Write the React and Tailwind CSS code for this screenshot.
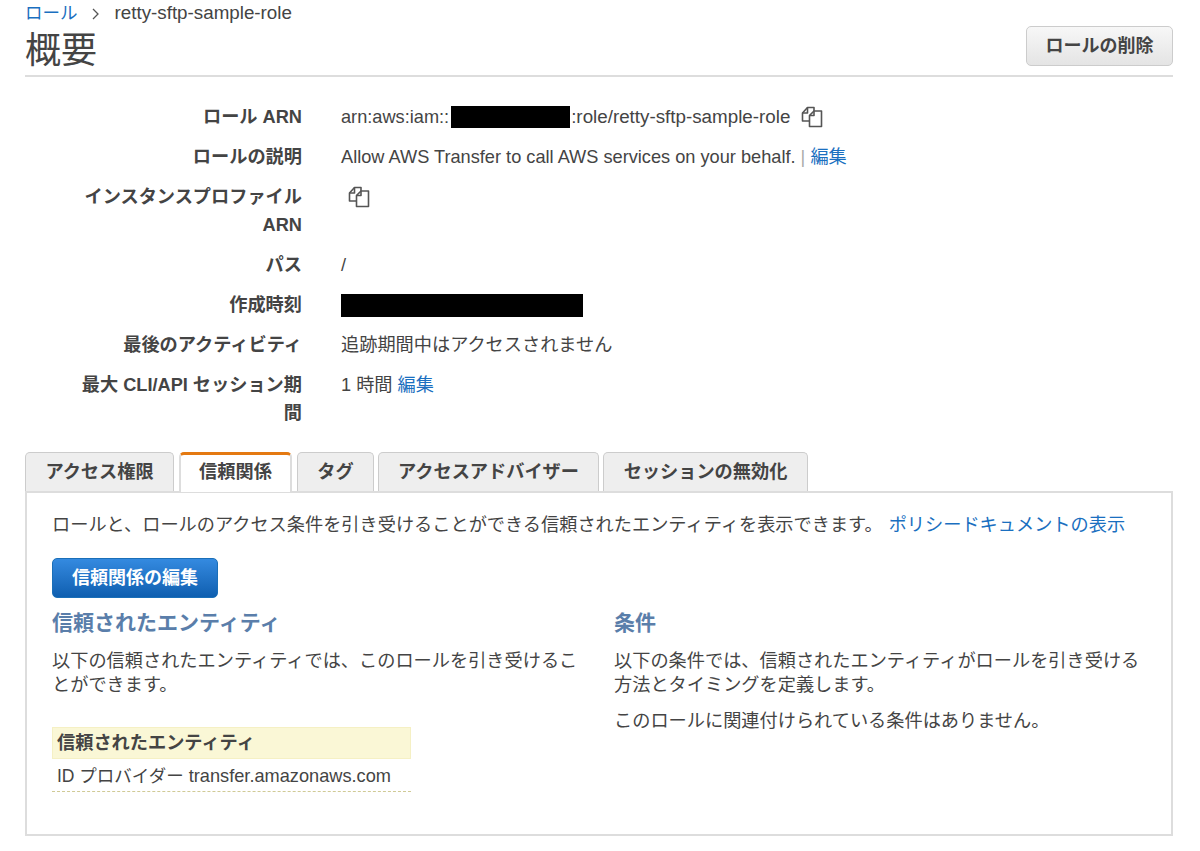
const FONT = "font-['Liberation_Sans','Noto_Sans_CJK_JP',sans-serif]";

const CopyIcon = () => (
  <svg width="22" height="22" viewBox="0 0 22 22" fill="none" stroke="#555" strokeWidth="1.6" strokeLinejoin="round" className="inline-block">
    <path d="M8.5 15H1.5V7L6.5 1.5H13V5" />
    <path d="M6.5 1.5V7H1.5" />
    <path d="M8.5 20.5V9.5L13 5H20.5V20.5Z" fill="#fff" />
    <path d="M13 5V9.5H8.5" />
  </svg>
);

const Row = ({ label, children, className = "" }) => (
  <div className={`flex leading-[28px] ${className}`}>
    <div className="w-[277px] shrink-0 text-right font-bold">{label}</div>
    <div className="ml-[39px] flex-1">{children}</div>
  </div>
);

const Tab = ({ label, active, width }) => (
  <div
    className={
      active
        ? `${width} h-[40px] -mb-px relative z-10 rounded-t-[5px] border-x-2 border-x-[#ddd] border-t-[3px] border-t-[#e47911] bg-white text-center font-bold leading-[34px]`
        : `${width} h-[39px] rounded-t-[5px] border-x border-t border-[#ccc] bg-[#eeeeee] text-center font-bold leading-[38px]`
    }
  >
    {label}
  </div>
);

export default function App() {
  return (
    <div className={`${FONT} h-[851px] w-[1200px] overflow-hidden bg-white pl-[25px] pr-[27px] text-[18.2px] text-[#444]`}>
      <div className="flex h-[27px] items-center text-[18.8px]">
        <span className="text-[17.5px] text-[#1a6fc0]">ロール</span>
        <svg width="10" height="14" viewBox="0 0 10 14" fill="none" stroke="#555" strokeWidth="1.3" className="ml-[13px] mr-[14px]">
          <path d="M2 2l5 5-5 5" />
        </svg>
        <span>retty-sftp-sample-role</span>
      </div>

      <div className="flex h-[50px] items-center justify-between border-b-2 border-[#ddd]">
        <h1 className="text-[36px] leading-[44px] font-normal">概要</h1>
        <button className="h-[40px] w-[147px] -translate-y-[5px] rounded-[5px] border border-[#ccc] bg-gradient-to-b from-[#f7f7f7] to-[#e4e4e4] text-[18px] font-bold text-[#444]">
          ロールの削除
        </button>
      </div>

      <div className="mt-[26px] flex flex-col gap-[12px]">
        <Row label="ロール ARN">
          <span className="flex items-center">
            arn:aws:iam::
            <span className="ml-[2px] mr-px h-[22px] w-[119px] bg-black" />
            <span className="text-[18.8px]">:role/retty-sftp-sample-role</span>
            <span className="ml-[11px] flex"><CopyIcon /></span>
          </span>
        </Row>
        <Row label="ロールの説明">
          Allow AWS Transfer to call AWS services on your behalf.{" "}
          <span className="text-[#aaa]">|</span> <span className="text-[#1a6fc0]">編集</span>
        </Row>
        <Row label={<>インスタンスプロファイル<br />ARN</>}>
          <span className="ml-[7px] flex h-[28px] items-center"><CopyIcon /></span>
        </Row>
        <Row label="パス">/</Row>
        <Row label="作成時刻">
          <span className="flex h-[28px] items-center"><span className="h-[23px] w-[242px] bg-black" /></span>
        </Row>
        <Row label="最後のアクティビティ">追跡期間中はアクセスされません</Row>
        <Row label={<>最大 CLI/API セッション期<br />間</>}>
          1 時間 <span className="text-[#1a6fc0]">編集</span>
        </Row>
      </div>

      <div className="mt-[25px] flex items-end gap-[4px]">
        <Tab label="アクセス権限" width="w-[149px]" />
        <Tab label="信頼関係" width="ml-[1px] w-[113px]" active />
        <Tab label="タグ" width="ml-[1px] w-[77px]" />
        <Tab label="アクセスアドバイザー" width="w-[221px]" />
        <Tab label="セッションの無効化" width="w-[205px]" />
      </div>

      <div className="h-[345px] border-2 border-[#ddd] px-[25px] pt-[18px]">
        <p className="leading-[28px]">
          ロールと、ロールのアクセス条件を引き受けることができる信頼されたエンティティを表示できます。
          <span className="ml-[6px] text-[#1a6fc0]">ポリシードキュメントの表示</span>
        </p>
        <button className="mt-[19px] block h-[40px] w-[166px] rounded-[5px] border border-[#1a6fb8] bg-gradient-to-b from-[#348ae0] to-[#0e5fb0] text-[18px] font-bold text-white">
          信頼関係の編集
        </button>
        <div className="mt-[9px] grid grid-cols-[562px_1fr]">
          <div className="w-[526px]">
            <h2 className="text-[21px] leading-[32px] font-bold text-[#5a7eaa]">信頼されたエンティティ</h2>
            <p className="mt-[10px] leading-[24px]">以下の信頼されたエンティティでは、このロールを引き受けることができます。</p>
            <div className="mt-[30px] w-[359px]">
              <div className="h-[32px] border border-[#f5f0c4] bg-[#faf7d6] pl-[4px] font-bold leading-[31px]">信頼されたエンティティ</div>
              <div className="h-[33px] border-b border-dashed border-[#d0ca96] pl-[5px] leading-[34px]">
                <span className="text-[17.5px]">ID プロバイダー</span> transfer.amazonaws.com
              </div>
            </div>
          </div>
          <div className="w-[530px]">
            <h2 className="text-[21px] leading-[32px] font-bold text-[#5a7eaa]">条件</h2>
            <p className="mt-[10px] leading-[24px]">以下の条件では、信頼されたエンティティがロールを引き受ける方法とタイミングを定義します。</p>
            <p className="mt-[12px] leading-[24px]">このロールに関連付けられている条件はありません。</p>
          </div>
        </div>
      </div>
    </div>
  );
}
